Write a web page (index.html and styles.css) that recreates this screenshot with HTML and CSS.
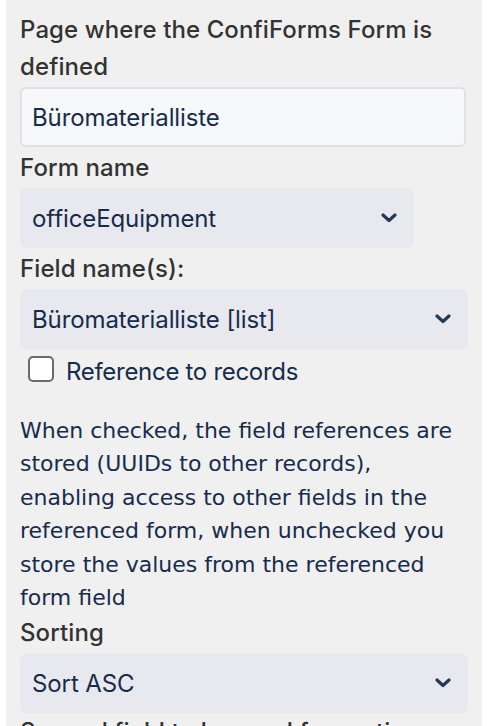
FILE: index.html
```html
<!DOCTYPE html>
<html>
<head>
<meta charset="utf-8">
<link rel="stylesheet" href="styles.css">
</head>
<body>
<div class="panel">
  <label class="label">Page where the ConfiForms Form is defined</label>
  <div class="input">Büromaterialliste</div>

  <label class="label">Form name</label>
  <div class="select select-short">
    <span>officeEquipment</span>
    <svg class="chev" viewBox="0 0 16 10" width="16" height="10"><path d="M2 2 L8 7.5 L14 2" fill="none" stroke="#253858" stroke-width="3.2" stroke-linecap="round" stroke-linejoin="round"/></svg>
  </div>

  <label class="label">Field name(s):</label>
  <div class="select">
    <span>Büromaterialliste [list]</span>
    <svg class="chev" viewBox="0 0 16 10" width="16" height="10"><path d="M2 2 L8 7.5 L14 2" fill="none" stroke="#253858" stroke-width="3.2" stroke-linecap="round" stroke-linejoin="round"/></svg>
  </div>

  <div class="check-row">
    <span class="checkbox"></span>
    <span class="check-label">Reference to records</span>
  </div>

  <p class="help">When checked, the field references are stored (UUIDs to other records), enabling access to other fields in the referenced form, when unchecked you store the values from the referenced form field</p>

  <label class="label">Sorting</label>
  <div class="select">
    <span>Sort ASC</span>
    <svg class="chev" viewBox="0 0 16 10" width="16" height="10"><path d="M2 2 L8 7.5 L14 2" fill="none" stroke="#253858" stroke-width="3.2" stroke-linecap="round" stroke-linejoin="round"/></svg>
  </div>

  <label class="label label-last">Second field to be used for sorting</label>
</div>
</body>
</html>
```
FILE: styles.css
```css
html, body {
  margin: 0;
  padding: 0;
  background: #ffffff;
}
body {
  height: 726px;
  overflow: hidden;
}
.panel {
  margin-left: 6px;
  width: 476px;
  box-sizing: border-box;
  background: #f0f0f0;
  padding: 11px 14px 40px 14px;
  display: flex;
  flex-direction: column;
  align-items: flex-start;
  font-family: Inter, "Liberation Sans", sans-serif;
}
.label {
  display: block;
  font-size: 24px;
  font-weight: 500;
  line-height: 37px;
  color: #333333;
  letter-spacing: 0.1px;
}
.label-last {
  margin-top: 2px;
  line-height: 30px;
}
.input {
  box-sizing: border-box;
  width: 446px;
  height: 60px;
  margin: 2px 0;
  border: 2px solid #dfe1e6;
  border-radius: 6px;
  background: #f7f8f9;
  color: #172b4d;
  font-size: 24px;
  letter-spacing: -0.1px;
  display: flex;
  align-items: center;
  padding-left: 10px;
}
.select {
  box-sizing: border-box;
  width: 448px;
  height: 60px;
  margin: 2px 0;
  border-radius: 7px;
  background: #e8e9ee;
  color: #172b4d;
  font-size: 24px;
  letter-spacing: -0.1px;
  display: flex;
  align-items: center;
  justify-content: space-between;
  padding: 0 17px 0 12px;
}
.select-short {
  width: 394px;
}
.chev {
  display: block;
}
.check-row {
  display: flex;
  align-items: center;
  gap: 12px;
  margin: 1px 0 0 8px;
  height: 34px;
}
.checkbox {
  box-sizing: border-box;
  width: 26px;
  height: 26px;
  border: 2px solid #6b6b6b;
  border-radius: 5px;
  background: #ffffff;
}
.check-label {
  font-size: 24px;
  color: #172b4d;
  letter-spacing: -0.3px;
  position: relative;
  top: 2px;
}
.help {
  margin: 28px 0 0 0;
  font-family: "DejaVu Sans", sans-serif;
  font-size: 22px;
  line-height: 33.4px;
  color: #172b4d;
  width: 448px;
}
```
